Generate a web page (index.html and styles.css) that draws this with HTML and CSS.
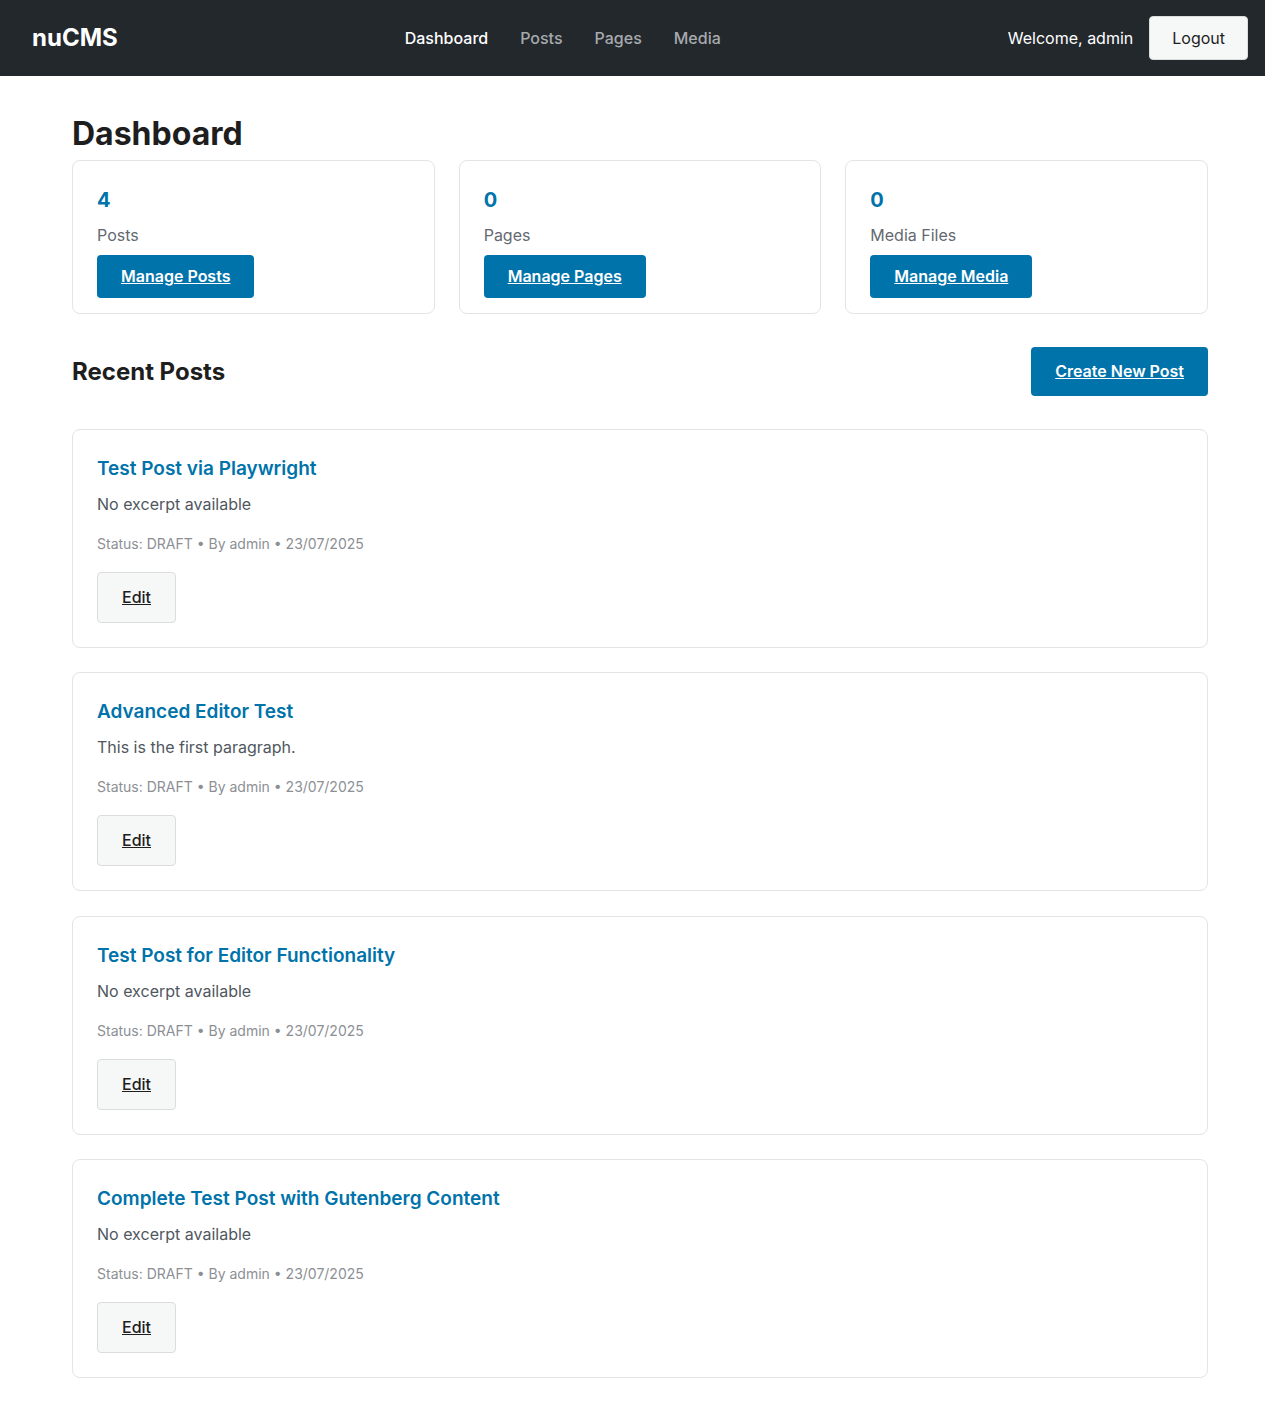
FILE: index.html
```html
<!DOCTYPE html>
<html lang="en">
<head>
<meta charset="utf-8">
<title>nuCMS Dashboard</title>
<link rel="stylesheet" href="styles.css">
</head>
<body>
<header class="topbar">
  <div class="logo">nuCMS</div>
  <nav class="nav">
    <a class="nav-link active" href="#">Dashboard</a>
    <a class="nav-link" href="#">Posts</a>
    <a class="nav-link" href="#">Pages</a>
    <a class="nav-link" href="#">Media</a>
  </nav>
  <div class="user">
    <span class="welcome">Welcome, admin</span>
    <button class="btn-logout">Logout</button>
  </div>
</header>
<main class="main">
  <h1 class="page-title">Dashboard</h1>
  <section class="stats">
    <div class="stat-card">
      <h3 class="stat-num">4</h3>
      <p class="stat-label">Posts</p>
      <a class="btn-primary" href="#">Manage Posts</a>
    </div>
    <div class="stat-card">
      <h3 class="stat-num">0</h3>
      <p class="stat-label">Pages</p>
      <a class="btn-primary" href="#">Manage Pages</a>
    </div>
    <div class="stat-card">
      <h3 class="stat-num">0</h3>
      <p class="stat-label">Media Files</p>
      <a class="btn-primary" href="#">Manage Media</a>
    </div>
  </section>
  <div class="section-head">
    <h2 class="section-title">Recent Posts</h2>
    <a class="btn-create" href="#">Create New Post</a>
  </div>
  <section class="posts">
    <article class="post-card">
      <h3 class="post-title">Test Post via Playwright</h3>
      <p class="post-excerpt">No excerpt available</p>
      <p class="post-meta">Status: DRAFT • By admin • 23/07/2025</p>
      <a class="btn-edit" href="#">Edit</a>
    </article>
    <article class="post-card">
      <h3 class="post-title">Advanced Editor Test</h3>
      <p class="post-excerpt">This is the first paragraph.</p>
      <p class="post-meta">Status: DRAFT • By admin • 23/07/2025</p>
      <a class="btn-edit" href="#">Edit</a>
    </article>
    <article class="post-card">
      <h3 class="post-title">Test Post for Editor Functionality</h3>
      <p class="post-excerpt">No excerpt available</p>
      <p class="post-meta">Status: DRAFT • By admin • 23/07/2025</p>
      <a class="btn-edit" href="#">Edit</a>
    </article>
    <article class="post-card">
      <h3 class="post-title">Complete Test Post with Gutenberg Content</h3>
      <p class="post-excerpt">No excerpt available</p>
      <p class="post-meta">Status: DRAFT • By admin • 23/07/2025</p>
      <a class="btn-edit" href="#">Edit</a>
    </article>
  </section>
</main>
</body>
</html>
```
FILE: styles.css
```css
* { box-sizing: border-box; }
body {
  margin: 0;
  background: #fff;
  font-family: Inter, "Liberation Sans", sans-serif;
  color: #1e1e1e;
  font-size: 16px;
  line-height: 1.5;
}
.topbar {
  background: #23282d;
  height: 76px;
  padding: 16px 17px 16px 32px;
  display: flex;
  align-items: center;
  justify-content: space-between;
}
.logo {
  color: #fff;
  font-size: 24px;
  font-weight: 700;
  line-height: 1.2;
}
.nav {
  display: flex;
  gap: 32px;
}
.nav-link {
  color: #a7aaad;
  text-decoration: none;
  font-weight: 500;
  font-size: 16px;
}
.nav-link.active { color: #fff; }
.user {
  display: flex;
  align-items: center;
  gap: 16px;
}
.welcome {
  color: #fff;
  font-size: 16px;
  font-weight: 400;
}
.btn-logout {
  font-family: inherit;
  font-size: 16px;
  font-weight: 400;
  color: #1e1e1e;
  background: #f6f7f7;
  border: 1px solid #dcdcde;
  border-radius: 4px;
  padding: 0 22px;
  height: 44px;
  line-height: normal;
}
.main {
  margin: 0 57px 0 72px;
  padding: 39px 0 40px;
}
.page-title {
  margin: 0 0 7px;
  font-size: 32px;
  line-height: 38px;
  font-weight: 700;
  color: #1e1e1e;
}
.stats {
  display: grid;
  grid-template-columns: repeat(3, 1fr);
  gap: 24px;
  margin-bottom: 33px;
}
.stat-card {
  border: 1px solid #e2e4e7;
  border-radius: 8px;
  padding: 24px 24px 15px;
}
.stat-num {
  margin: 0 0 8px;
  font-size: 20px;
  line-height: 30px;
  font-weight: 700;
  color: #0073aa;
}
.stat-label {
  margin: 0 0 8px;
  color: #646970;
  font-size: 16px;
  line-height: 24px;
}
.btn-primary {
  display: inline-block;
  background: #0073aa;
  color: #fff;
  font-weight: 600;
  font-size: 16px;
  height: 43px;
  line-height: 43px;
  padding: 0 24px;
  border-radius: 4px;
  text-decoration: underline;
  vertical-align: top;
}
.section-head {
  display: flex;
  align-items: center;
  justify-content: space-between;
  margin-bottom: 33px;
}
.section-title {
  margin: 0;
  font-size: 24px;
  line-height: 1.2;
  font-weight: 700;
  padding-top: 2px;
}
.btn-create {
  display: inline-block;
  background: #0073aa;
  color: #fff;
  font-weight: 600;
  font-size: 16px;
  height: 49px;
  line-height: 49px;
  padding: 0 24px;
  border-radius: 4px;
  text-decoration: underline;
}
.posts {
  display: flex;
  flex-direction: column;
  gap: 24.4px;
}
.post-card {
  border: 1px solid #e2e4e7;
  border-radius: 8px;
  padding: 24px;
}
.post-title {
  margin: 0 0 8px;
  font-size: 19px;
  line-height: 30px;
  font-weight: 600;
  color: #0073aa;
}
.post-excerpt {
  margin: 0 0 16px;
  color: #50575e;
  font-size: 16px;
  line-height: 24px;
}
.post-meta {
  margin: 0 0 16px;
  color: #8c8f94;
  font-size: 14px;
  line-height: 24px;
}
.btn-edit {
  display: inline-block;
  background: #f6f7f7;
  border: 1px solid #dcdcde;
  border-radius: 4px;
  color: #1e1e1e;
  font-weight: 500;
  font-size: 16px;
  padding: 0 24px;
  height: 51px;
  line-height: 49px;
  text-decoration: underline;
  vertical-align: top;
}
```
